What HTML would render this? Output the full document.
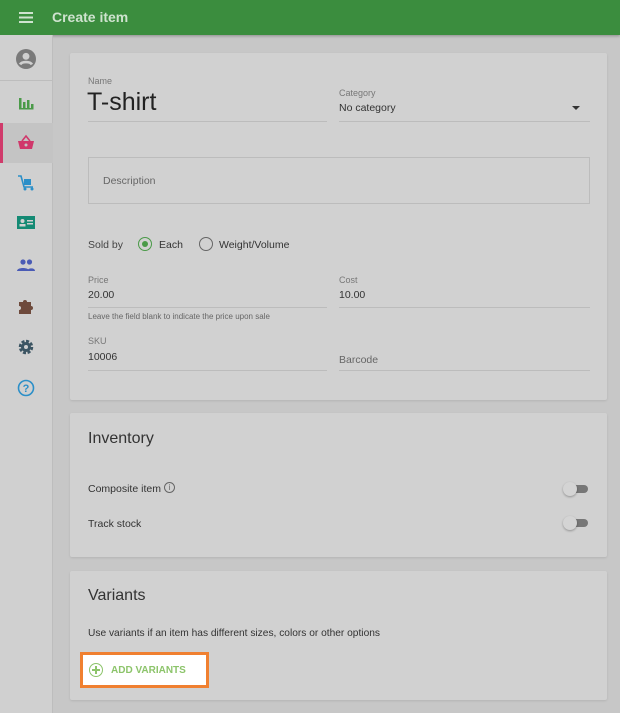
<!DOCTYPE html>
<html><head><meta charset="utf-8"><style>
*{box-sizing:border-box;margin:0;padding:0}
body{width:620px;height:713px;overflow:hidden;background:#c7c7c7;font-family:"Liberation Sans",sans-serif;color:#333;position:relative}
.hdr{position:absolute;left:0;top:0;width:620px;height:35px;background:#3b8d3e;box-shadow:0 1px 3px rgba(0,0,0,.3)}
.hdr .t{position:absolute;left:52px;top:9px;color:#cfe3cf;font-size:14px;font-weight:bold}
.side{position:absolute;left:0;top:35px;width:53px;height:678px;background:#d0d0d0;border-right:1px solid #bdbdbd}
.ico{position:absolute;left:16px;width:20px;height:20px}
.card{position:absolute;left:70px;width:537px;background:#d1d1d1;border-radius:2px;box-shadow:0 1px 2px rgba(0,0,0,.1)}
.lbl{position:absolute;font-size:9px;color:#777}
.val{position:absolute;font-size:10.5px;color:#333}
.line{position:absolute;height:1px;background:#bcbcbc}
</style></head><body>
<div class="hdr">
<svg style="position:absolute;left:19px;top:12px" width="14" height="11"><rect y="0" width="14" height="2" fill="#cfe3cf"/><rect y="4.5" width="14" height="2" fill="#cfe3cf"/><rect y="9" width="14" height="2" fill="#cfe3cf"/></svg>
<div class="t">Create item</div></div>
<div class="side">
<svg class="ico" style="top:14px;left:16px" width="22" height="22" viewBox="0 0 22 22"><circle cx="11" cy="11" r="11" fill="#7a7a7a"/><circle cx="11" cy="8" r="3.8" fill="#d0d0d0"/><path d="M4.5 17c2-3.5 11-3.5 13 0" stroke="#d0d0d0" stroke-width="3" fill="none"/></svg>
<div style="position:absolute;left:0;top:45px;width:53px;height:1px;background:#bdbdbd"></div>
<svg class="ico" style="top:58px" viewBox="0 0 20 20"><rect x="3" y="5" width="2.5" height="11" fill="#4a9a48"/><rect x="7" y="9" width="2.5" height="7" fill="#4a9a48"/><rect x="11" y="7" width="2.5" height="9" fill="#4a9a48"/><rect x="15" y="11" width="2.5" height="5" fill="#4a9a48"/><rect x="3" y="15" width="14.5" height="1.5" fill="#4a9a48"/></svg>
<div style="position:absolute;left:0;top:88px;width:53px;height:40px;background:#c4c4c4;border-left:3px solid #d03b6b"></div>
<svg class="ico" style="top:98px" viewBox="0 0 20 20"><path d="M2 8h16l-2 8H4z" fill="#d0386b"/><path d="M6 8l4-5 4 5" stroke="#d0386b" stroke-width="1.6" fill="none"/><circle cx="10" cy="12" r="1.5" fill="#c4c4c4"/></svg>
<svg class="ico" style="top:138px" viewBox="0 0 20 20"><path d="M2 3h3l3 11h9" stroke="#2b8fc8" stroke-width="1.6" fill="none"/><rect x="8" y="6" width="7" height="6" fill="#2b8fc8"/><circle cx="9" cy="16" r="1.5" fill="#2b8fc8"/><circle cx="16" cy="16" r="1.5" fill="#2b8fc8"/></svg>
<svg class="ico" style="top:178px" viewBox="0 0 20 20"><rect x="1" y="3" width="18" height="13" fill="#148a74"/><circle cx="6.5" cy="8" r="2" fill="#d0d0d0"/><rect x="3.5" y="11" width="6" height="2.5" fill="#d0d0d0"/><rect x="11" y="7" width="6" height="1.5" fill="#d0d0d0"/><rect x="11" y="10" width="6" height="1.5" fill="#d0d0d0"/></svg>
<svg class="ico" style="top:220px" viewBox="0 0 20 20"><circle cx="7" cy="7" r="2.6" fill="#4a5bb5"/><circle cx="13.5" cy="7" r="2.6" fill="#4a5bb5"/><path d="M1 16c0-4 12-4 12 0z" fill="#4a5bb5"/><path d="M11 16c0-3 8-4 8 0z" fill="#4a5bb5"/></svg>
<svg class="ico" style="top:261px" viewBox="0 0 20 20"><path d="M3 6h4a2 2 0 1 1 4 0h4v4a2 2 0 1 1 0 4v4H3v-4a2 2 0 1 0 0-4z" fill="#6e4a3c"/></svg>
<svg class="ico" style="top:302px" viewBox="0 0 20 20"><circle cx="10" cy="10" r="5.5" fill="none" stroke="#3c5563" stroke-width="3.5" stroke-dasharray="2.8 1.5"/><circle cx="10" cy="10" r="5" fill="#3c5563"/><circle cx="10" cy="10" r="2" fill="#d0d0d0"/></svg>
<svg class="ico" style="top:343px" viewBox="0 0 20 20"><circle cx="10" cy="10" r="7.5" fill="none" stroke="#2b8fc8" stroke-width="1.6"/><text x="10" y="14" font-size="11" font-weight="bold" fill="#2b8fc8" text-anchor="middle" font-family="Liberation Sans">?</text></svg>
</div>

<div class="card" style="top:53px;height:347px">
<div class="lbl" style="left:18px;top:23px">Name</div>
<div style="position:absolute;left:17px;top:35px;font-size:25px;color:#222">T-shirt</div>
<div class="line" style="left:18px;top:68px;width:239px"></div>
<div class="lbl" style="left:269px;top:35px">Category</div>
<div class="val" style="left:269px;top:49px">No category</div>
<div style="position:absolute;left:502px;top:53px;border:4px solid transparent;border-top:4px solid #333;border-bottom:0"></div>
<div class="line" style="left:269px;top:68px;width:251px"></div>
<div style="position:absolute;left:18px;top:104px;width:502px;height:47px;border:1px solid #bcbcbc"></div>
<div class="val" style="left:33px;top:122px;color:#666">Description</div>
<div class="val" style="left:18px;top:186px;color:#444">Sold by</div>
<div style="position:absolute;left:68px;top:184px;width:14px;height:14px;border:1.5px solid #4a9a48;border-radius:50%"></div>
<div style="position:absolute;left:72px;top:188px;width:6px;height:6px;background:#4a9a48;border-radius:50%"></div>
<div class="val" style="left:89px;top:186px">Each</div>
<div style="position:absolute;left:129px;top:184px;width:14px;height:14px;border:1.5px solid #666;border-radius:50%"></div>
<div class="val" style="left:149px;top:186px">Weight/Volume</div>
<div class="lbl" style="left:18px;top:222px">Price</div>
<div class="val" style="left:18px;top:236px">20.00</div>
<div class="line" style="left:18px;top:254px;width:239px"></div>
<div style="position:absolute;left:18px;top:259px;font-size:8px;color:#666">Leave the field blank to indicate the price upon sale</div>
<div class="lbl" style="left:269px;top:222px">Cost</div>
<div class="val" style="left:269px;top:236px">10.00</div>
<div class="line" style="left:269px;top:254px;width:251px"></div>
<div class="lbl" style="left:18px;top:283px">SKU</div>
<div class="val" style="left:18px;top:298px">10006</div>
<div class="line" style="left:18px;top:317px;width:239px"></div>
<div class="val" style="left:269px;top:301px;color:#666">Barcode</div>
<div class="line" style="left:269px;top:317px;width:251px"></div>
</div>

<div class="card" style="top:413px;height:144px">
<div style="position:absolute;left:18px;top:17px;font-size:16px;color:#333">Inventory</div>
<div class="val" style="left:18px;top:70px">Composite item</div>
<div style="position:absolute;left:94px;top:69px;width:11px;height:11px;border:1px solid #666;border-radius:50%;font-size:8px;text-align:center;line-height:10px;color:#666">i</div>
<div style="position:absolute;left:496px;top:72px;width:22px;height:8px;border-radius:4px;background:#777"></div>
<div style="position:absolute;left:493px;top:69px;width:14px;height:14px;border-radius:50%;background:#d4d4d4;box-shadow:0 1px 2px rgba(0,0,0,.3)"></div>
<div class="val" style="left:18px;top:105px">Track stock</div>
<div style="position:absolute;left:496px;top:106px;width:22px;height:8px;border-radius:4px;background:#777"></div>
<div style="position:absolute;left:493px;top:103px;width:14px;height:14px;border-radius:50%;background:#d4d4d4;box-shadow:0 1px 2px rgba(0,0,0,.3)"></div>
</div>

<div class="card" style="top:571px;height:129px">
<div style="position:absolute;left:18px;top:16px;font-size:16px;color:#333">Variants</div>
<div class="val" style="left:18px;top:57px;font-size:10.2px">Use variants if an item has different sizes, colors or other options</div>
</div>
<div style="position:absolute;left:80px;top:652px;width:129px;height:36px;border:3px solid #f08030;background:#fff"></div>
<div style="position:absolute;left:89px;top:663px;width:14px;height:14px;border:1.5px solid #8cc46a;border-radius:50%"></div>
<div style="position:absolute;left:92px;top:669px;width:8px;height:1.5px;background:#8cc46a"></div>
<div style="position:absolute;left:95.3px;top:666px;width:1.5px;height:8px;background:#8cc46a"></div>
<div style="position:absolute;left:111px;top:665px;font-size:10px;font-weight:bold;color:#8cc46a">ADD VARIANTS</div>
</body></html>
